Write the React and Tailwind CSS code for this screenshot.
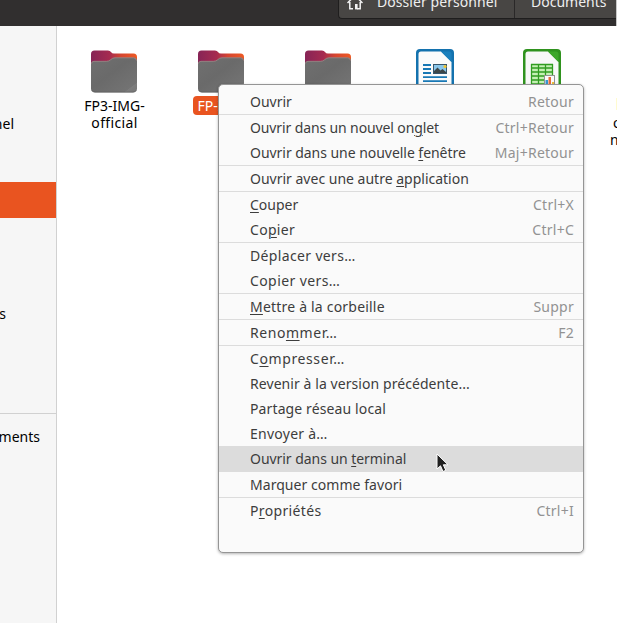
import clsx from 'clsx'

const MENU = [
  [{ label: ['Ouvrir'], keys: 'Retour' }],
  [
    { label: ['Ouvrir dans un nouvel on', 'g', 'let'], keys: 'Ctrl+Retour', tracking: 'tracking-[-0.12px]' },
    { label: ['Ouvrir dans une nouvelle ', 'f', 'enêtre'], keys: 'Maj+Retour', tracking: 'tracking-[-0.04px]' },
  ],
  [{ label: ['Ouvrir avec une autre ', 'a', 'pplication'] }],
  [
    { label: ['', 'C', 'ouper'], keys: 'Ctrl+X' },
    { label: ['Co', 'p', 'ier'], keys: 'Ctrl+C', tracking: 'tracking-[0.3px]' },
  ],
  [
    { label: ['Déplacer vers…'], tracking: 'tracking-[0.35px]' },
    { label: ['Copier vers…'], tracking: 'tracking-[0.4px]' },
  ],
  [{ label: ['', 'M', 'ettre à la corbeille'], keys: 'Suppr', tracking: 'tracking-[0.2px]' }],
  [{ label: ['Reno', 'm', 'mer…'], keys: 'F2', tracking: 'tracking-[0.55px]' }],
  [
    { label: ['C', 'o', 'mpresser…'], tracking: 'tracking-[0.6px]' },
    { label: ['Revenir à la version précédente...'], tracking: 'tracking-[0.07px]' },
    { label: ['Partage réseau local'], tracking: 'tracking-[0.12px]' },
    { label: ['Envoyer à…'], tracking: 'tracking-[0.25px]' },
    { label: ['Ouvrir dans un ', 't', 'erminal'], active: true, tracking: 'tracking-[-0.05px]' },
    { label: ['Marquer comme favori'], tracking: 'tracking-[0.05px]' },
  ],
  [{ label: ['P', 'r', 'opriétés'], keys: 'Ctrl+I', tracking: 'tracking-[0.35px]' }],
]

function FolderIcon() {
  return (
    <svg width="46" height="43" viewBox="0 0 46 43" className="block">
      <defs>
        <linearGradient id="folderBack" x1="0" x2="1" y1="0" y2="0">
          <stop offset="0" stopColor="#872456" />
          <stop offset=".4" stopColor="#a52b50" />
          <stop offset=".65" stopColor="#d54530" />
          <stop offset="1" stopColor="#ee5a24" />
        </linearGradient>
        <linearGradient id="folderFront" x1="0" x2="1" y1="0" y2="1">
          <stop offset="0" stopColor="#707070" />
          <stop offset=".45" stopColor="#6a6a6a" />
          <stop offset=".86" stopColor="#737373" />
          <stop offset=".87" stopColor="#7c7c7c" />
          <stop offset="1" stopColor="#777" />
        </linearGradient>
      </defs>
      <path d="M0 4Q0 .5 3.500.5H17Q19 .5 20 2Q21 3.500 23 3.500H42.500Q46 3.500 46 7V20H0Z" fill="url(#folderBack)" />
      <path d="M0 14Q0 11 3 11H15.500Q18 11 19.500 9.500Q21.500 7.500 24 7.500H42.500Q46 7.500 46 11V38.500Q46 42 42.500 42H3.500Q0 42 0 38.500Z" fill="url(#folderFront)" />
      <path d="M.5 13.500Q.8 11.300 3 11.300H15.500Q18 11.300 19.500 9.800Q21.500 7.800 24 7.800H42.500Q45 7.800 45.500 10.500" fill="none" stroke="#a8898a" strokeWidth=".7" />
      <path d="M1 40.500Q2 42.300 4 42.300H42Q44 42.300 45 40.500" fill="none" stroke="#4c4c4c" strokeWidth=".7" />
    </svg>
  )
}

function WriterIcon() {
  return (
    <svg width="38" height="46" viewBox="0 0 38 46" className="-mb-0.5 block">
      <rect width="38" height="46" rx="4" fill="#1472ae" />
      <path d="M5 2.500H25L35.500 13V46H2.500V5Q2.500 2.500 5 2.500Z" fill="#fbfbfb" />
      <path d="M25 2.500H33Q35.500 2.500 35.500 5V13Z" fill="#1c80bd" />
      <path d="M7 16h8M7 20h8M7 24h8M7 28.200h24M7 32.200h24M7 36h18" stroke="#1878b5" strokeWidth="1.800" />
      <rect x="17" y="15" width="14" height="10" fill="#38566b" />
      <rect x="18" y="16" width="12" height="8" fill="#8ac6ea" />
      <path d="M18 24v-2l3.500-3.500 3 3 2-1.500 3.500 3v1z" fill="#3d4648" />
      <circle cx="29" cy="17.500" r="1.600" fill="#f2c632" />
    </svg>
  )
}

function CalcIcon() {
  return (
    <svg width="38" height="46" viewBox="0 0 38 46" className="-mb-0.5 block">
      <rect width="38" height="46" rx="4" fill="#2f921e" />
      <path d="M5 2.500H25L35.500 13V46H2.500V5Q2.500 2.500 5 2.500Z" fill="#f8f8f8" />
      <path d="M25 2.500H33Q35.500 2.500 35.500 5V13Z" fill="#3da72a" />
      <rect x="8" y="15" width="22" height="30" fill="#c5f0b4" />
      <path d="M8 15.500H30M8 19H30M8 23H30M8 27H30M8 31H30M8 35H30M8.500 15V40M15.500 15V40M22.500 15V40M29.500 15V40" stroke="#319c21" strokeWidth="1.300" />
      <rect x="21.500" y="26.500" width="10" height="12" fill="#fafafa" stroke="#929292" />
      <path d="M22.500 31h2.500v6h-2.500z" fill="#3695d2" />
      <path d="M25.500 28h2.500v9h-2.500z" fill="#e66a37" />
      <path d="M29 33h2v4h-2z" fill="#eec13c" />
    </svg>
  )
}

function HomeIcon() {
  return (
    <svg width="16" height="16" viewBox="0 0 16 16" fill="none" stroke="#f3f3f3" strokeWidth="1.500" className="mb-2 shrink-0">
      <path d="M.5 9L8 1.500L15.500 9M2.800 8V14.700H6M10 14.700H13.200V8" />
      <path d="M8 10h2.600v5.400H8z" fill="#f3f3f3" stroke="none" />
    </svg>
  )
}

function FileCell({ icon, children }) {
  return (
    <div className="flex w-[107px] shrink-0 flex-col items-center">
      <div className="flex h-[45px] items-end justify-center">{icon}</div>
      {children}
    </div>
  )
}

function MenuItem({ label, keys, active, tracking }) {
  const [before, key, after] = label
  return (
    <div
      className={clsx(
        'flex items-center justify-between pr-[9px] pl-[31px] text-[14px]',
        active ? 'h-[26px] bg-[#dcdcdc] pb-0.5' : 'h-[25px]',
      )}
    >
      <span className={clsx('whitespace-pre text-[#3d3d3d]', tracking)}>
        {before}
        {key && <span className="underline decoration-1 underline-offset-2">{key}</span>}
        {after}
      </span>
      {keys && <span className="tracking-[0.25px] text-[#929292]">{keys}</span>}
    </div>
  )
}

export default function App() {
  return (
    <div className="relative flex h-[623px] w-[617px] flex-col overflow-hidden bg-white font-['Noto_Sans','Open_Sans',sans-serif] text-[14px] text-black">
      <header className="flex h-[26px] shrink-0 justify-end border-r border-[#c8c8c8] bg-[#312f2f]">
        <div className="flex h-[19px] w-[278px] shrink-0 items-end overflow-hidden rounded-bl border-b border-l border-[#1f1e1e] bg-[#484644] text-[#eeeeee]">
          <div className="flex h-[25px] w-[176px] shrink-0 items-center gap-[14px] border-r border-[#2a2828] pl-2">
            <HomeIcon />
            <span className="mb-[9px] tracking-[0.06px] whitespace-nowrap">Dossier personnel</span>
          </div>
          <div className="flex h-[25px] items-center pl-4">
            <span className="mb-[9px]">Documents</span>
          </div>
        </div>
      </header>

      <div className="flex min-h-0 flex-1">
        <aside className="flex w-[57px] shrink-0 flex-col overflow-hidden border-r border-[#d1d1d1] bg-[#f6f6f6]">
          <div className="mt-[79px] flex h-9 items-center justify-end pr-[42px]">
            <span>Personnel</span>
          </div>
          <div className="mt-[41px] h-9 shrink-0 bg-[#e95420]" />
          <div className="mt-[77px] flex h-9 items-center justify-end pr-[50px]">
            <span>Images</span>
          </div>
          <div className="mt-[82px] flex h-[46px] items-center justify-end border-t border-[#d1d1d1] pr-4">
            <span>Documents</span>
          </div>
        </aside>

        <main className="flex min-w-0 flex-1 items-start overflow-hidden pt-[22px] pl-[3px]">
          <FileCell icon={<FolderIcon />}>
            <div className="mt-1 flex flex-col items-center pl-0.5 leading-[17px]">
              <span>FP3-IMG-</span>
              <span className="tracking-[0.35px]">official</span>
            </div>
          </FileCell>
          <FileCell icon={<FolderIcon />}>
            <p className="mt-[3px] w-14 rounded bg-[#e95420] pl-[5px] leading-[19px] text-white">FP-IMG</p>
          </FileCell>
          <FileCell icon={<FolderIcon />} />
          <FileCell icon={<WriterIcon />} />
          <FileCell icon={<CalcIcon />} />
          <div className="mt-[50px] ml-[15px] w-5 leading-[17px]">
            <div className="ml-[6px] h-3 w-1 bg-[#fffbd0]" />
            <p className="mt-1 pl-[3px]">o</p>
            <p>n</p>
          </div>
        </main>
      </div>

      <div className="absolute top-[84px] left-[218px] h-[469px] w-[366px] overflow-hidden rounded-[5px] border border-[#959595] bg-[#fafafa] pt-1 shadow-[0_1px_3px_rgba(0,0,0,0.3)]">
        {MENU.map((group, i) => (
          <div key={i} className={clsx(i > 0 && 'border-t border-[#dcdcdc]')}>
            {group.map((item) => (
              <MenuItem key={item.label.join('')} {...item} />
            ))}
          </div>
        ))}
      </div>

      <svg width="14" height="20" viewBox="0 0 14 20" className="absolute top-[453px] left-[436px]">
        <path d="M1 1V16L4.500 12.800L7 18.500L9.800 17.300L7.300 11.800H12Z" fill="#202020" stroke="#fff" strokeWidth="1" />
      </svg>
    </div>
  )
}
